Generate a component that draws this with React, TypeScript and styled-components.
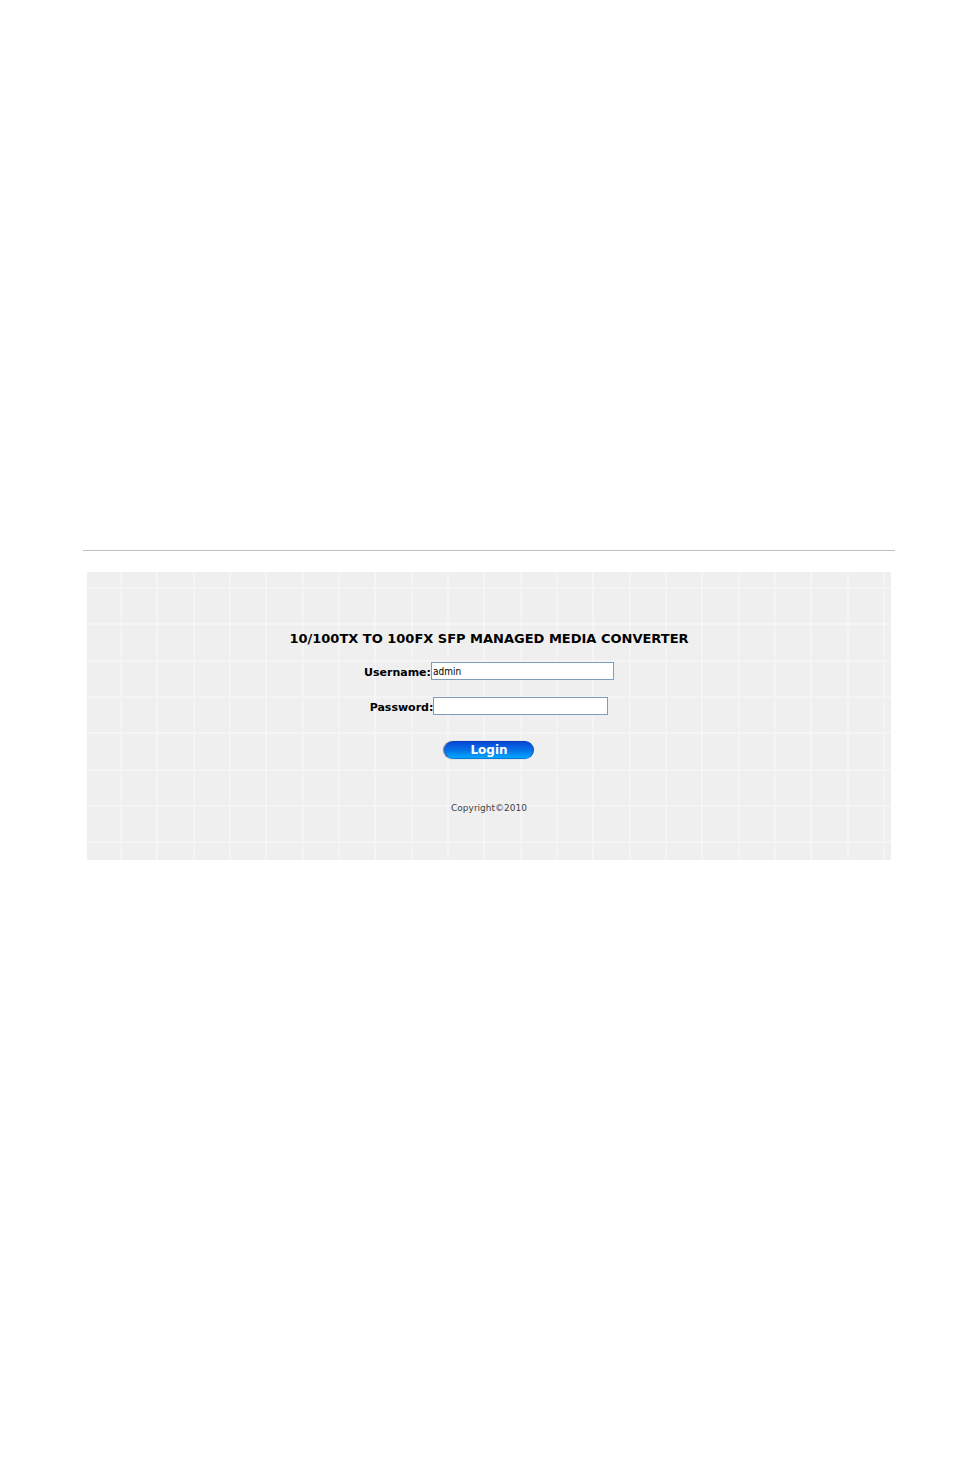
import React from "react";
import styled, { createGlobalStyle } from "styled-components";

const GlobalStyle = createGlobalStyle`
  body {
    margin: 0;
    background-color: #ffffff;
    font-family: Verdana, "DejaVu Sans", sans-serif;
  }
`;

const Page = styled.main`
  padding: 550px 59px 80px 83px;
`;

const Divider = styled.hr`
  height: 1px;
  margin: 0;
  border: 0;
  background-color: #bfbfbf;
`;

// Three grid cells per 109px tile
const gridStops = `
  #f4f4f4 0 2px, transparent 2px 36px,
  #f5f5f5 36px 38px, transparent 38px 73px,
  #f4f4f4 73px 75px, transparent 75px
`;

const LoginPanel = styled.form`
  display: flex;
  flex-direction: column;
  align-items: center;
  margin: 21px 4px 0;
  padding: 58px 0 44px;
  background-color: #efefef;
  background-image: linear-gradient(to right, ${gridStops}),
    linear-gradient(to bottom, ${gridStops});
  background-size: 109px 109px;
  background-position: 33px 0, 0 15px;
`;

const Title = styled.h1`
  margin: 0 0 14px;
  color: #000000;
  font-size: 13px;
  font-weight: bold;
  line-height: 18px;
`;

const Field = styled.div`
  display: flex;
  align-items: flex-start;
  height: 18px;
  margin-bottom: 17px;
`;

const Label = styled.label`
  padding-top: 2px;
  color: #000000;
  font-size: 11px;
  font-weight: bold;
  line-height: 18px;
`;

const Input = styled.input<{ $width: number }>`
  box-sizing: border-box;
  width: ${({ $width }) => $width}px;
  height: 18px;
  padding: 0 1px;
  border: 1px solid #7f9db9;
  border-radius: 0;
  background-color: #ffffff;
  color: #000000;
  font-family: "DejaVu Sans Condensed", "DejaVu Sans", sans-serif;
  font-size: 10px;
`;

const LoginButton = styled.button`
  width: 90px;
  height: 18px;
  margin: 9px 0 41px;
  padding: 0;
  border: 1px solid #0c4fc8;
  border-top-color: #0a3fc4;
  border-bottom-color: #0a78dc;
  border-radius: 9px;
  background: linear-gradient(#0848d4, #0570e8 50%, #00a8ff);
  box-shadow: -1px 0 1px #7a7a88;
  color: #ffffff;
  font-family: inherit;
  font-size: 12px;
  font-weight: bold;
  line-height: 16px;
`;

const Copyright = styled.small`
  color: #444444;
  font-size: 9px;
  line-height: 16px;
`;

const App = () => (
  <>
    <GlobalStyle />
    <Page>
      <Divider />
      <LoginPanel onSubmit={(event) => event.preventDefault()}>
        <Title>10/100TX TO 100FX SFP MANAGED MEDIA CONVERTER</Title>

        <Field>
          <Label htmlFor="username">Username:</Label>
          <Input id="username" type="text" defaultValue="admin" $width={183} />
        </Field>

        <Field>
          <Label htmlFor="password">Password:</Label>
          <Input id="password" type="password" $width={175} />
        </Field>

        <LoginButton type="submit">Login</LoginButton>
        <Copyright>Copyright©2010</Copyright>
      </LoginPanel>
    </Page>
  </>
);

export default App;
